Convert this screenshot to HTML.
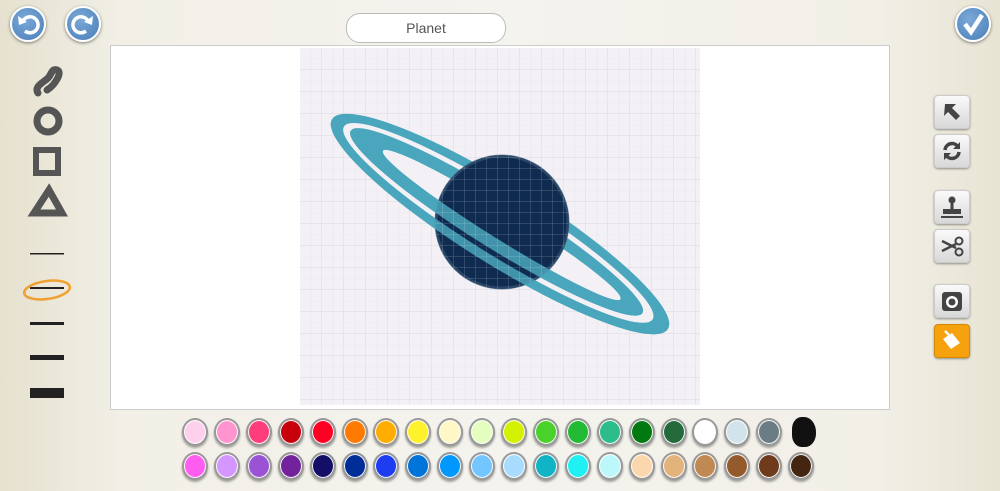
<!DOCTYPE html>
<html><head><meta charset="utf-8"><style>
html,body{margin:0;padding:0;width:1000px;height:491px;overflow:hidden;font-family:"Liberation Sans",sans-serif;}
body{background:linear-gradient(90deg,#e6e1cf 0%,#f1efe6 12%,#f4f3ee 50%,#f1efe6 88%,#e8e4d4 100%);position:relative;}
.abs{position:absolute}
.rb{position:absolute;width:32px;height:32px;border-radius:50%;background:radial-gradient(circle at 40% 35%,#7aa8d8,#4a7fb8);border:2px solid #fff;box-shadow:0 1px 3px rgba(0,0,0,.5);}
.tb{position:absolute;left:934px;width:34px;height:32px;border-radius:4px;background:linear-gradient(#fafafa,#d8d8d8);box-shadow:0 1px 2px rgba(0,0,0,.4);border:1px solid #ccc}
.c{position:absolute;width:26px;height:28px;border-radius:50%;border:2px solid #999;box-shadow:inset 0 0 0 1px #fff,0 2px 2px rgba(0,0,0,.35);box-sizing:border-box}
</style></head><body>
<div class="rb" style="left:10px;top:6px"><svg width="32" height="32" viewBox="0 0 32 32"><path d="M11 13a8 8 0 1 1 2 10" fill="none" stroke="#fff" stroke-width="3.5"/><path d="M6 8l1 9 8-3z" fill="#fff"/></svg></div>
<div class="rb" style="left:65px;top:6px"><svg width="32" height="32" viewBox="0 0 32 32"><path d="M21 13a8 8 0 1 0 -2 10" fill="none" stroke="#fff" stroke-width="3.5"/><path d="M26 8l-1 9-8-3z" fill="#fff"/></svg></div>
<div class="rb" style="left:955px;top:6px"><svg width="32" height="32" viewBox="0 0 32 32"><path d="M8 16l6 8 11-17" fill="none" stroke="#fff" stroke-width="4.5"/></svg></div>
<div class="abs" style="left:346px;top:13px;width:158px;height:28px;border:1px solid #bbb;border-radius:14px;background:#fff;text-align:center;line-height:28px;font-size:14px;color:#555">Planet</div>
<div class="abs" style="left:110px;top:45px;width:778px;height:363px;background:#fff;border:1px solid #ccc"></div>
<svg class="abs" style="left:300px;top:48px" width="400" height="357">
<defs><pattern id="g" width="22" height="22" patternUnits="userSpaceOnUse"><path d="M22 0V22H0" fill="none" stroke="#ddd8e4" stroke-width="1"/><path d="M11 0V22M0 11H22" stroke="#ebe7ef" stroke-width=".6"/></pattern>
<pattern id="w" width="11" height="11" patternUnits="userSpaceOnUse"><path d="M11 0V11H0" fill="none" stroke="#fff" stroke-width=".8" opacity=".35"/></pattern>
<clipPath id="front"><rect x="-210" y="0" width="420" height="60"/></clipPath></defs>
<rect width="400" height="357" fill="#f3f1f6"/><rect width="400" height="357" fill="url(#g)"/>
<g transform="translate(200,176) rotate(32)">
<ellipse rx="198" ry="40" fill="#4aa6bc"/>
<ellipse cx="-2" rx="182" ry="31" fill="#f3f1f6"/>
<ellipse cx="-4" rx="172" ry="26" fill="#4aa6bc"/>
<ellipse cx="2" rx="140" ry="14" fill="#f3f1f6"/>
</g>
<circle cx="202" cy="174" r="67" fill="#0f2b50"/>
<circle cx="202" cy="174" r="66" fill="none" stroke="#3c5a78" stroke-width="3" opacity=".6"/>
<g transform="translate(200,176) rotate(32)" clip-path="url(#front)" opacity=".85">
<path d="M-198 0A198 40 0 0 0 198 0H180A182 31 0 0 1 -184 0z" fill="#4aa6bc"/>
<path d="M-176 0A172 26 0 0 0 168 0H142A140 14 0 0 1 -138 0z" fill="#4aa6bc"/>
</g>
<circle cx="202" cy="174" r="67" fill="url(#w)"/>
</svg>
<svg class="abs" style="left:20px;top:60px" width="60" height="360">
<path d="M18 33c-4-6 4-10 9-14s4-11 10-9-2 15-10 20" fill="none" stroke="#555" stroke-width="7" stroke-linecap="round"/>
<circle cx="28" cy="61" r="11" fill="none" stroke="#555" stroke-width="7"/>
<rect x="16" y="90" width="22" height="23" fill="none" stroke="#555" stroke-width="6"/>
<path d="M29 130L42 153H14z" fill="none" stroke="#555" stroke-width="7"/>
<rect x="10" y="193" width="34" height="1.5" fill="#222"/>
<rect x="10" y="227" width="34" height="2" fill="#222"/>
<ellipse cx="27" cy="230" rx="23" ry="9" transform="rotate(-8 27 230)" fill="none" stroke="#f0a030" stroke-width="2.5"/>
<rect x="10" y="262" width="34" height="3" fill="#222"/>
<rect x="10" y="295" width="34" height="5" fill="#222"/>
<rect x="10" y="328" width="34" height="10" fill="#222"/>
</svg>
<div class="tb" style="top:95px"><svg width="34" height="32"><path d="M10 8h11l-4 4 8 8-4 4-8-8-4 4z" fill="#444"/></svg></div>
<div class="tb" style="top:134px"><svg width="34" height="32"><path d="M10 15a7 7 0 0 1 13-3M24 17a7 7 0 0 1-13 3" fill="none" stroke="#444" stroke-width="3.5"/><path d="M25 7v7h-7zM9 25v-7h7z" fill="#444"/></svg></div>
<div class="tb" style="top:190px"><svg width="34" height="32"><circle cx="17" cy="9" r="3.5" fill="#444"/><rect x="15.5" y="11" width="3" height="7" fill="#444"/><rect x="8" y="18" width="18" height="5" fill="#444"/><rect x="6" y="25" width="22" height="2" fill="#444"/></svg></div>
<div class="tb" style="top:229px"><svg width="34" height="32"><path d="M7 11l14 7M7 21l14-7" stroke="#444" stroke-width="2.5"/><circle cx="24" cy="11" r="3.5" fill="none" stroke="#444" stroke-width="2"/><circle cx="24" cy="22" r="3.5" fill="none" stroke="#444" stroke-width="2"/></svg></div>
<div class="tb" style="top:284px"><svg width="34" height="32"><rect x="7" y="7" width="20" height="19" rx="3" fill="#444"/><circle cx="17" cy="17" r="6" fill="#fff"/><circle cx="17" cy="17" r="3.5" fill="#444"/></svg></div>
<div class="tb" style="top:324px;background:#f5a20e;border-color:#d88a00"><svg width="34" height="32"><path d="M8 14l9-6 8 10-9 6z" fill="#fff"/><path d="M14 10l-4-4" stroke="#fff" stroke-width="2.5"/></svg></div>
<div id="pal"></div>
<script>
var r1=["#ffd0ec","#ff94cf","#ff3d7b","#c8000c","#ff0025","#ff7b00","#ffad00","#fff22d","#fff7c6","#e4ffbd","#d4f100","#4ad12a","#22bb33","#2cbd8a","#007a10","#246a3a","#ffffff","#d3e3ec","#6a7d85"];
var r2=["#ff5cf0","#d596ff","#9b53d6","#72239b","#130e66","#002e99","#1e3df0","#0074d8","#0098ff","#73c6ff","#a8dcff","#11b4c4","#1ef0f4","#bcf8fb","#fcd6ac","#e2b37a","#c08852","#955a2c","#6e3c1c","#432510"];
var h="";r1.forEach(function(c,i){h+='<div class="c" style="left:'+(182+i*31.9)+'px;top:418px;background:'+c+'"></div>'});
r2.forEach(function(c,i){h+='<div class="c" style="left:'+(182+i*31.9)+'px;top:452px;background:'+c+'"></div>'});
h+='<div class="abs" style="left:792px;top:417px;width:24px;height:30px;background:#111;border-radius:40% 50% 45% 40%"></div>';
document.getElementById('pal').innerHTML=h;
</script>
</body></html>
